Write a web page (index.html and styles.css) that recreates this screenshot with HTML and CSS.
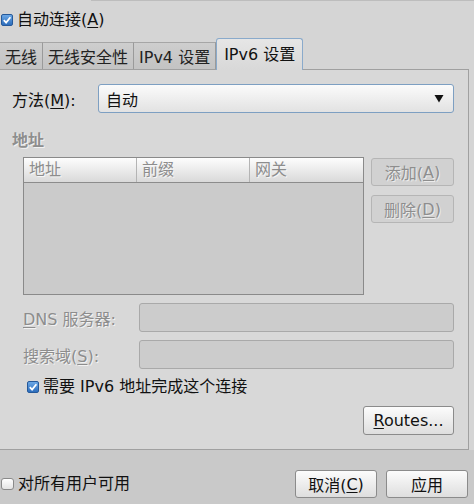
FILE: index.html
```html
<!DOCTYPE html>
<html lang="zh">
<head>
<meta charset="utf-8">
<link rel="stylesheet" href="styles.css">
</head>
<body>
<div class="topline"></div>
<div class="toprow">
  <div class="chk"><span class="box on"><svg viewBox="0 0 10 10" width="10" height="10"><path d="M1.8 5.2 L4.1 7.6 L8.4 2.3" stroke="#fff" stroke-width="1.8" fill="none"/></svg></span><span>自动连接(<u>A</u>)</span></div>
</div>
<div class="tabs">
  <div class="tab">无线</div>
  <div class="tab">无线安全性</div>
  <div class="tab">IPv4 设置</div>
  <div class="tab active">IPv6 设置</div>
</div>
<div class="panel">
  <div class="method">
    <span class="mlabel">方法(<u>M</u>):</span>
    <div class="combo"><span>自动</span><svg width="10" height="8" viewBox="0 0 10 8"><path d="M0.5 0H9.5L5 7.5Z" fill="#111"/></svg></div>
  </div>
  <div class="title">地址</div>
  <div class="addr">
    <div class="table">
      <div class="thead">
        <div class="th">地址</div>
        <div class="th">前缀</div>
        <div class="th last">网关</div>
      </div>
    </div>
    <div class="side">
      <div class="btn dis">添加(<u>A</u>)</div>
      <div class="btn dis">删除(<u>D</u>)</div>
    </div>
  </div>
  <div class="field">
    <span class="flabel"><u>D</u>NS 服务器:</span>
    <div class="inp"></div>
  </div>
  <div class="field">
    <span class="flabel">搜索域(<u>S</u>):</span>
    <div class="inp"></div>
  </div>
  <div class="req">
    <div class="chk"><span class="box on"><svg viewBox="0 0 10 10" width="10" height="10"><path d="M1.8 5.2 L4.1 7.6 L8.4 2.3" stroke="#fff" stroke-width="1.8" fill="none"/></svg></span><span>需要 IPv6 地址完成这个连接</span></div>
  </div>
  <div class="routes-row">
    <div class="btn routes"><span><u>R</u>outes...</span></div>
  </div>
</div>
<div class="footer">
  <div class="chk"><span class="box off"></span><span>对所有用户可用</span></div>
  <div class="spacer"></div>
  <div class="btn foot">取消(<u>C</u>)</div>
  <div class="btn foot">应用</div>
</div>
</body>
</html>
```

FILE: styles.css
```css
* { box-sizing: border-box; }
body {
  margin: 0;
  width: 474px;
  height: 504px;
  overflow: hidden;
  background: #d5d5d5;
  font-family: "DejaVu Sans", "Noto Sans CJK SC", sans-serif;
  font-size: 16px;
  color: #111;
}
u { text-decoration-thickness: 1px; text-underline-offset: 2px; }
.topline { height: 1px; margin-left: 91px; background: #bdbdbd; }
.toprow { height: 37px; display: flex; align-items: center; padding-left: 1px; }
.chk { display: flex; align-items: center; gap: 4px; line-height: 20px; white-space: nowrap; }
.box { width: 12px; height: 12px; flex: none; display: flex; align-items: center; justify-content: center; border-radius: 2px; }
.box.on { background: linear-gradient(#6ca8e6, #2c6dbc); border: 1px solid #25599a; }
.box.off { width: 13px; height: 12px; background: linear-gradient(#ffffff, #e4e4e4); border: 1px solid #8a8a8a; border-radius: 3px; }

.tabs { height: 31px; display: flex; align-items: flex-end; position: relative; z-index: 1; }
.tab {
  height: 27px;
  padding: 0 5px 1px;
  display: flex;
  align-items: center;
  background: linear-gradient(#cecece, #c3c3c3);
  border-top: 1px solid #a6a6a6;
  border-right: 1px solid #9a9a9a;
  color: #222;
  white-space: nowrap;
}
.tab.active {
  height: 32px;
  margin-bottom: -1px;
  padding: 0 7px 3px;
  background: linear-gradient(#e6e6e6, #d8d8d8);
  border: 1px solid #8aaacb;
  border-bottom: none;
  border-radius: 3px 3px 0 0;
  color: #111;
}

.panel {
  width: 469px;
  height: 381px;
  background: #d8d8d8;
  border: 1px solid #a0a0a0;
  border-left: none;
  padding: 14px 14px 14px 12px;
  display: flex;
  flex-direction: column;
}
.method { display: flex; align-items: center; height: 29px; }
.mlabel { width: 86px; flex: none; }
.combo {
  flex: 1;
  height: 29px;
  border: 1px solid #7d9fc2;
  border-radius: 3px;
  background: linear-gradient(#fbfbfb, #e2e2e2);
  display: flex;
  align-items: center;
  justify-content: space-between;
  padding: 0 9px 0 7px;
}
.title {
  margin-top: 18px;
  height: 20px;
  line-height: 20px;
  font-weight: bold;
  color: #8e8e8e;
  text-shadow: 1px 1px 0 #f2f2f2;
}
.addr { margin-top: 6px; margin-left: 11px; display: flex; gap: 7px; height: 138px; }
.table { width: 341px; flex: none; border: 1px solid #8a8a8a; background: #cbcbcb; }
.thead {
  height: 25px;
  display: grid;
  grid-template-columns: 113px 113px 1fr;
  background: linear-gradient(#fdfdfd, #d9d9d9);
  border-bottom: 1px solid #8c8c8c;
}
.th {
  padding-left: 5px;
  line-height: 24px;
  color: #8d8d8d;
  text-shadow: 1px 1px 0 #f6f6f6;
  border-right: 1px solid #b4b4b4;
}
.th.last { border-right: none; }
.side { width: 83px; display: flex; flex-direction: column; gap: 9px; padding-top: 1px; }
.btn {
  height: 29px;
  border: 1px solid #8b8b8b;
  border-radius: 3px;
  background: linear-gradient(#fcfcfc, #dedede);
  display: flex;
  align-items: center;
  justify-content: center;
  white-space: nowrap;
}
.btn.dis {
  height: 28px;
  border-color: #b5b5b5;
  background: #d1d1d1;
  color: #8e8e8e;
  text-shadow: 1px 1px 0 #ececec;
}
.field { margin-top: 8px; margin-left: 11px; display: flex; align-items: center; height: 29px; }
.flabel { width: 116px; flex: none; color: #8d8d8d; text-shadow: 1px 1px 0 #f2f2f2; }
.inp { flex: 1; height: 29px; border: 1px solid #a9a9a9; border-radius: 3px; background: #cccccc; }
.req { margin-top: 8px; margin-left: 15px; height: 20px; display: flex; align-items: center; }
.routes-row { margin-top: 9px; display: flex; justify-content: flex-end; }
.routes { width: 91px; }

.footer {
  height: 54px;
  display: flex;
  align-items: center;
  padding: 20px 6px 6px 1px;
  background: #c9c9c9;
}
.spacer { flex: 1; }
.btn.foot { width: 82px; height: 28px; margin-left: 9px; }
```
